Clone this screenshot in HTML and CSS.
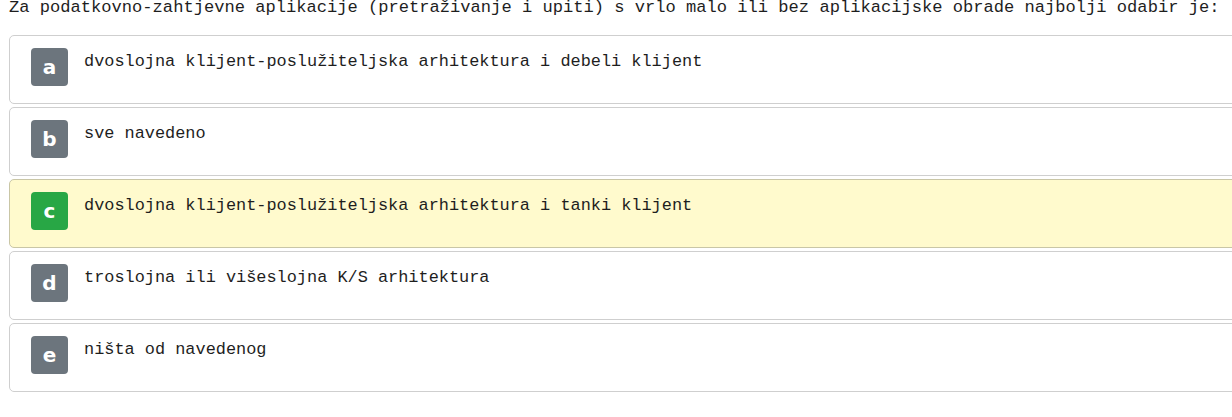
FILE: index.html
```html
<!DOCTYPE html>
<html lang="hr">
<head>
<meta charset="utf-8">
<title>Pitanje</title>
<link rel="stylesheet" href="styles.css">
</head>
<body>
<div class="page">
  <p class="question">Za podatkovno-zahtjevne aplikacije (pretraživanje i upiti) s vrlo malo ili bez aplikacijske obrade najbolji odabir je:</p>
  <ul class="options">
    <li class="option"><span class="badge">a</span><span class="text">dvoslojna klijent-poslužiteljska arhitektura i debeli klijent</span></li>
    <li class="option"><span class="badge">b</span><span class="text">sve navedeno</span></li>
    <li class="option correct"><span class="badge">c</span><span class="text">dvoslojna klijent-poslužiteljska arhitektura i tanki klijent</span></li>
    <li class="option"><span class="badge">d</span><span class="text">troslojna ili višeslojna K/S arhitektura</span></li>
    <li class="option"><span class="badge">e</span><span class="text">ništa od navedenog</span></li>
  </ul>
</div>
</body>
</html>
```

FILE: styles.css
```css
html, body {
  margin: 0;
  padding: 0;
  background: #fff;
  overflow: hidden;
}

.page {
  padding: 0 0 0 9px;
  font-family: "Liberation Mono", "Courier New", monospace;
  font-size: 16.9px;
  color: #1e1e1e;
}

.question {
  margin: -2px 0 0 0;
  font-size: 17.1px;
  line-height: 19px;
  white-space: nowrap;
}

.options {
  list-style: none;
  margin: 18px 0 0 0;
  padding: 0;
  width: 1300px;
  display: flex;
  flex-direction: column;
  gap: 3px;
}

.option {
  display: flex;
  align-items: flex-start;
  gap: 16px;
  height: 69px;
  box-sizing: border-box;
  padding: 12px 20px 0 21px;
  border: 1px solid #cfcfcf;
  border-radius: 5px;
  background: #fff;
}

.option.correct {
  background: #fffacd;
  border-color: #c9c6a6;
}

.badge {
  flex: 0 0 auto;
  width: 37px;
  height: 38px;
  border-radius: 4px;
  background: #6c757d;
  color: #fff;
  font-family: "DejaVu Sans", Verdana, sans-serif;
  font-weight: bold;
  font-size: 20px;
  line-height: 38px;
  text-align: center;
}

.correct .badge {
  background: #28a745;
}

.text {
  line-height: 24px;
  margin-top: 2px;
  white-space: nowrap;
}
```
